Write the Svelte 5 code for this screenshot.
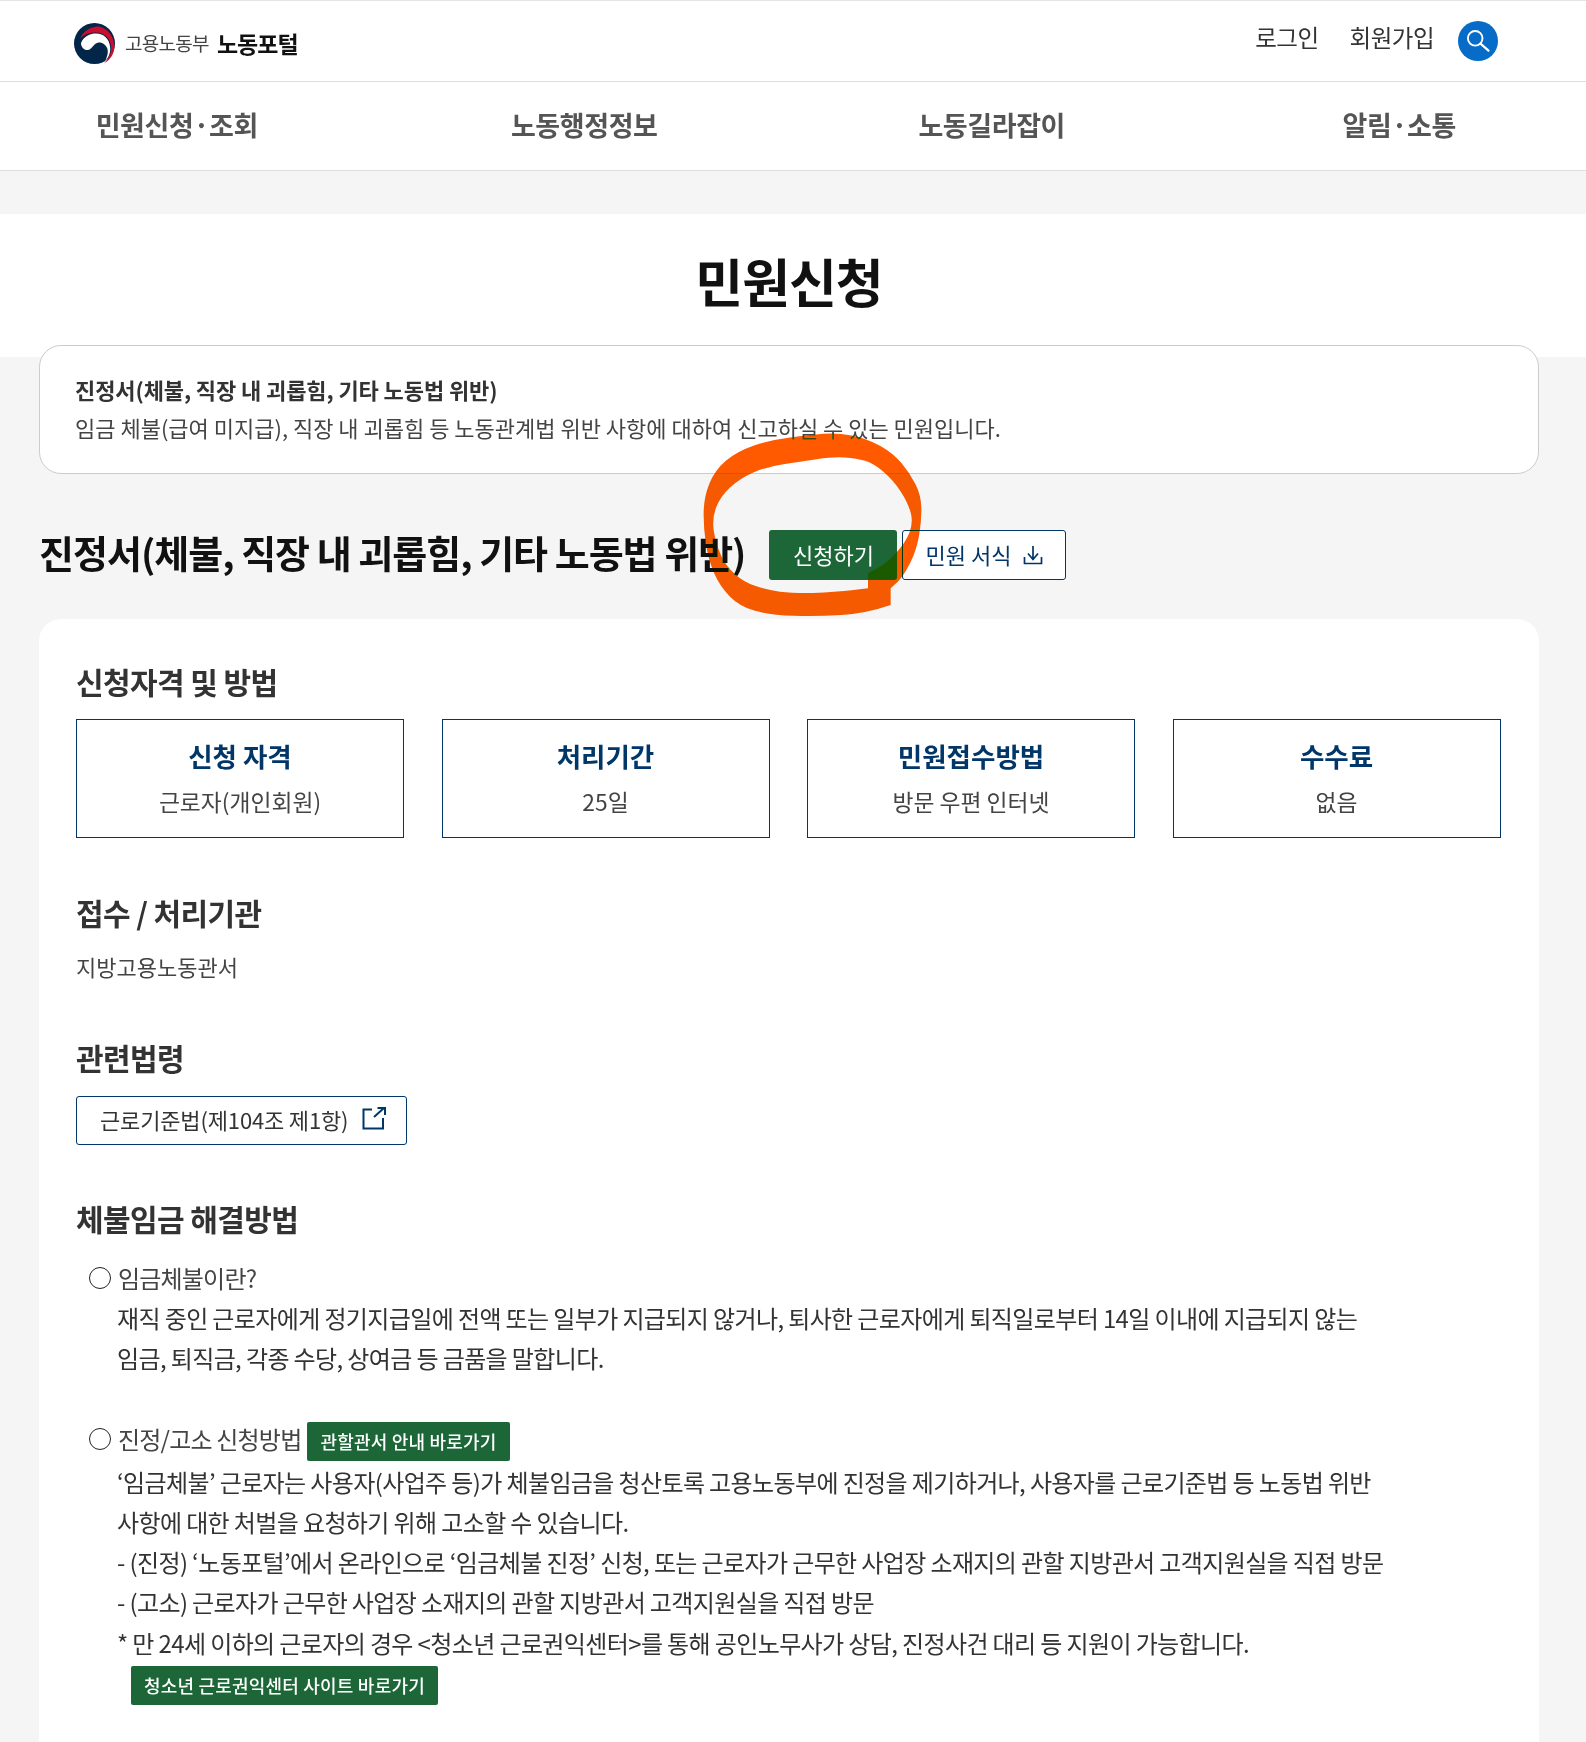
<script>
  const nav = [['민원신청', '조회'], ['노동행정정보'], ['노동길라잡이'], ['알림', '소통']];
  const boxes = [
    ['신청 자격', '근로자(개인회원)'],
    ['처리기간', '25일'],
    ['민원접수방법', '방문 우편 인터넷'],
    ['수수료', '없음']
  ];
  const lead = '진정서(체불, 직장 내 괴롭힘, 기타 노동법 위반)';

  function smooth(pts) {
    let d = `M${pts[0][0]} ${pts[0][1]}`;
    for (let i = 1; i < pts.length - 1; i++) {
      const mx = (pts[i][0] + pts[i + 1][0]) / 2;
      const my = (pts[i][1] + pts[i + 1][1]) / 2;
      d += ` Q${pts[i][0]} ${pts[i][1]} ${mx} ${my}`;
    }
    const l = pts[pts.length - 1];
    return d + ` L${l[0]} ${l[1]}`;
  }
  const outer = [[692,555],[620,580],[470,590],[330,585],[240,560],[180,500],[145,420],[130,320],[132,230],[165,150],[230,95],[330,60],[450,45],[530,38],[620,55],[700,100],[750,160],[783,225],[785,300],[770,390],[730,470],[692,505]];
  const inner = [[624,505],[520,518],[400,520],[320,510],[250,485],[200,440],[170,380],[155,300],[180,230],[240,175],[320,140],[420,125],[520,110],[590,115],[640,130],[700,180],[745,250],[760,310],[735,370],[680,430],[624,460]];
  const scribble = smooth(outer) + ' Z ' + smooth(inner) + ' Z';
</script>

<div class="page">
  <header class="top">
    <a class="logo" href="#top">
      <svg class="mark" viewBox="0 0 41 41" aria-hidden="true">
        <circle cx="20.500" cy="20.500" r="20.500" fill="#02254a"/>
        <path d="M6 16C9 8 17 3 25 3.500C34 5 40 14 40.500 23C40.500 31 36 37 30 40.500C35 35 38 29 37 23C36 14 29 9.500 22 9.500C15 9.500 9 12 6 16Z" fill="#c8102e"/>
        <path d="M7 20C10 13 16 10.500 22 10.500C30 10.500 35 16 36 23C37 29 35 34 31 38.500C33 34 34.500 30 33.500 26C32 21.500 28 19 24.500 19.500C20 20 18.500 26 14 27C10 27.500 7 24 7 20Z" fill="#fff"/>
      </svg>
      <span class="org">고용노동부</span>
      <strong class="portal">노동포털</strong>
    </a>
    <div class="util">
      <a href="#login">로그인</a>
      <a href="#join">회원가입</a>
      <button class="search" aria-label="검색">
        <svg viewBox="0 0 40 40" width="40" height="40" fill="none" stroke="#fff" stroke-linecap="round">
          <circle cx="17.200" cy="17.300" r="7.300" stroke-width="1.900"/>
          <path d="M22.500 22.700 30.500 29.700" stroke-width="2.200"/>
        </svg>
      </button>
    </div>
  </header>

  <nav class="gnb">
    {#each nav as n}
      <a href="#nav">{n[0]}{#if n[1]}<span class="dot">·</span>{n[1]}{/if}</a>
    {/each}
  </nav>

  <div class="hero"><h1>민원신청</h1></div>

  <main class="wrap">
    <section class="intro">
      <strong>{lead}</strong>
      <p>임금 체불(급여 미지급), 직장 내 괴롭힘 등 노동관계법 위반 사항에 대하여 신고하실 수 있는 민원입니다.</p>
    </section>

    <div class="titlebar">
      <h2>{lead}</h2>
      <button class="apply">신청하기</button>
      <button class="form">민원 서식
        <svg viewBox="0 0 20 20" width="20" height="20" fill="none" stroke="#003668" stroke-width="1.700">
          <path d="M10 1V15M5 8.500 10 14.500l5-6M1.500 12v6.500h17V12"/>
        </svg>
      </button>
    </div>

    <section class="card">
      <h3 class="first">신청자격 및 방법</h3>
      <div class="boxes">
        {#each boxes as b}
          <div class="box"><b>{b[0]}</b><span>{b[1]}</span></div>
        {/each}
      </div>

      <h3 class="agency">접수 / 처리기관</h3>
      <p class="agency-text">지방고용노동관서</p>

      <h3 class="law">관련법령</h3>
      <a class="lawlink" href="#law">근로기준법(제104조 제1항)
        <svg viewBox="0 0 24 24" width="24" height="24" fill="none" stroke="#003668" stroke-width="2">
          <path d="M10 2.500H1.500V21.500H21V11M12 10 22 1M15.500 1H23V8"/>
        </svg>
      </a>

      <h3 class="solve">체불임금 해결방법</h3>
      <div class="q"><i class="ring"></i>임금체불이란?</div>
      <div class="a">
        재직 중인 근로자에게 정기지급일에 전액 또는 일부가 지급되지 않거나, 퇴사한 근로자에게 퇴직일로부터 14일 이내에 지급되지 않는<br />
        임금, 퇴직금, 각종 수당, 상여금 등 금품을 말합니다.
      </div>

      <div class="q second"><i class="ring"></i>진정/고소 신청방법<a class="tag" href="#office">관할관서 안내 바로가기</a></div>
      <div class="a">
        ‘임금체불’ 근로자는 사용자(사업주 등)가 체불임금을 청산토록 고용노동부에 진정을 제기하거나, 사용자를 근로기준법 등 노동법 위반<br />
        사항에 대한 처벌을 요청하기 위해 고소할 수 있습니다.<br />
        - (진정) ‘노동포털’에서 온라인으로 ‘임금체불 진정’ 신청, 또는 근로자가 근무한 사업장 소재지의 관할 지방관서 고객지원실을 직접 방문<br />
        - (고소) 근로자가 근무한 사업장 소재지의 관할 지방관서 고객지원실을 직접 방문<br />
        * 만 24세 이하의 근로자의 경우 &lt;청소년 근로권익센터&gt;를 통해 공인노무사가 상담, 진정사건 대리 등 지원이 가능합니다.
      </div>
      <a class="tag wide" href="#youth">청소년 근로권익센터 사이트 바로가기</a>
    </section>
  </main>

  <svg class="scribble" viewBox="0 0 1320 660" aria-hidden="true">
    <path d={scribble} fill="#ff5a00" fill-rule="evenodd"/>
  </svg>
</div>

<style>
  :global(body) { margin: 0; background: #f5f5f5; }
  .page {
    position: relative; height: 1742px; overflow: hidden; background: #f5f5f5;
    font-family: "Noto Sans CJK KR", "Noto Sans", sans-serif; color: #333;
  }
  a { color: inherit; text-decoration: none; }
  button { font: inherit; cursor: pointer; }
  h1, h2, h3, p { margin: 0; }

  .top {
    height: 80px; background: #fff;
    border-top: 1px solid #e5e5e5; border-bottom: 1px solid #ddd;
    display: flex; justify-content: space-between; padding: 0 88px 0 74px;
  }
  .logo { display: flex; align-items: center; padding-top: 4px; height: 76px; }
  .mark { width: 41px; height: 41px; margin-right: 10px; }
  .org { font-size: 19px; color: #444; letter-spacing: -0.7px; margin-right: 8px; padding-bottom: 1px; }
  .portal { font-size: 23px; font-weight: 700; color: #111; letter-spacing: -1px; padding-bottom: 1px; }
  .util { display: flex; align-items: center; font-size: 23.500px; letter-spacing: -0.5px; color: #333; height: 80px; }
  .util a { margin-right: 31px; padding-bottom: 8px; }
  .util a:nth-child(2) { margin-right: 24px; }
  .search {
    width: 40px; height: 40px; border-radius: 50%; border: 0; padding: 0; background: #066cc8;
    display: flex; align-items: center; justify-content: center;
  }

  .gnb {
    display: grid; grid-template-columns: repeat(4, 407.500px); height: 88px; margin-left: -27px;
    width: 1640px; align-items: center; background: #fff; border-bottom: 1px solid #ddd;
  }
  .gnb a { text-align: center; font-size: 27px; font-weight: 700; color: #555; letter-spacing: -0.4px; padding-bottom: 4px; }
  .dot { margin: 0; }

  .hero { margin-top: 43px; height: 143px; background: #fff; text-align: center; padding-right: 8px; box-sizing: border-box; }
  h1 { font-size: 52px; font-weight: 700; color: #111; line-height: 68px; padding-top: 33px; letter-spacing: -1px; }

  .wrap { width: 1500px; margin: -12px 0 0 39px; position: relative; }
  .intro {
    box-sizing: border-box; height: 129px; background: #fff; border: 1px solid #ccc; border-radius: 22px;
    padding: 24px 35px 0; font-size: 22px; line-height: 38px;
  }
  .intro strong { font-weight: 700; display: block; letter-spacing: -0.1px; }
  .intro p { color: #444; }

  .titlebar { display: flex; align-items: center; height: 50px; margin-top: 56px; }
  h2 { font-size: 38px; font-weight: 700; color: #111; letter-spacing: -1px; margin-right: 24px; padding-bottom: 7px; }
  .apply {
    width: 128px; height: 50px; border-radius: 3px; border: 0; background: #1c6637; color: #fff;
    font-size: 22px; margin-right: 5px; padding: 0 0 2px;
  }
  .form {
    width: 164px; height: 50px; box-sizing: border-box; border-radius: 3px; border: 1px solid #003668; background: #fff;
    color: #003668; font-size: 22px; display: flex; align-items: center; justify-content: center; gap: 12px; padding: 0 0 2px;
  }
  .form svg { margin-top: 2px; }

  .card { background: #fff; border-radius: 22px; margin-top: 39px; padding: 41px 37px 0; height: 1200px; }
  h3 { font-size: 30px; font-weight: 700; color: #333; line-height: 42px; letter-spacing: -0.6px; }
  .boxes { display: grid; grid-template-columns: repeat(4, 328px); gap: 37.500px; margin-top: 17px; }
  .box {
    box-sizing: border-box; height: 119px; border: 1px solid #003668; display: flex; flex-direction: column;
    align-items: center; justify-content: center; gap: 11px; font-size: 22.800px; color: #444; padding-bottom: 3px;
  }
  .box b { font-size: 26.500px; color: #003668; font-weight: 700; line-height: 38px; }
  .box span { line-height: 32px; }

  .agency { margin-top: 53px; }
  .agency-text { font-size: 22px; line-height: 36px; color: #444; margin-top: 15px; }
  .law { margin-top: 52px; }
  .lawlink {
    margin-top: 18px; box-sizing: border-box; width: 331px; height: 49px; border: 1px solid #003668; border-radius: 3px;
    display: flex; align-items: center; gap: 14px; padding: 0 0 3px 23px; font-size: 22px; letter-spacing: -0.15px; color: #333; background: #fff;
  }
  .solve { margin-top: 52px; }
  .q { display: flex; align-items: center; font-size: 24px; line-height: 40px; color: #444; margin-top: 19px; padding-left: 13px; letter-spacing: -0.8px; }
  .q.second { margin-top: 37px; height: 46px; }
  .q .tag { margin-top: 6px; }
  .ring {
    width: 22px; height: 22px; box-sizing: border-box; border: 1px solid #222; border-radius: 50%; margin-right: 7px;
    flex: none;
  }
  .a { font-size: 24px; line-height: 40.300px; color: #333; padding-left: 41px; white-space: nowrap; letter-spacing: -0.62px; }
  .tag {
    margin-left: 6px; background: #1c6637; color: #fff; font-size: 18px; font-weight: 500; height: 39px;
    border-radius: 2px; display: inline-flex; align-items: center; padding: 0 13px 2px; box-sizing: border-box; letter-spacing: 0.2px;
  }
  .tag.wide { margin: 3px 0 0 55px; }

  .scribble {
    position: absolute; left: 660px; top: 420px; width: 440px; height: 220px;
    mix-blend-mode: darken; pointer-events: none;
  }
</style>
